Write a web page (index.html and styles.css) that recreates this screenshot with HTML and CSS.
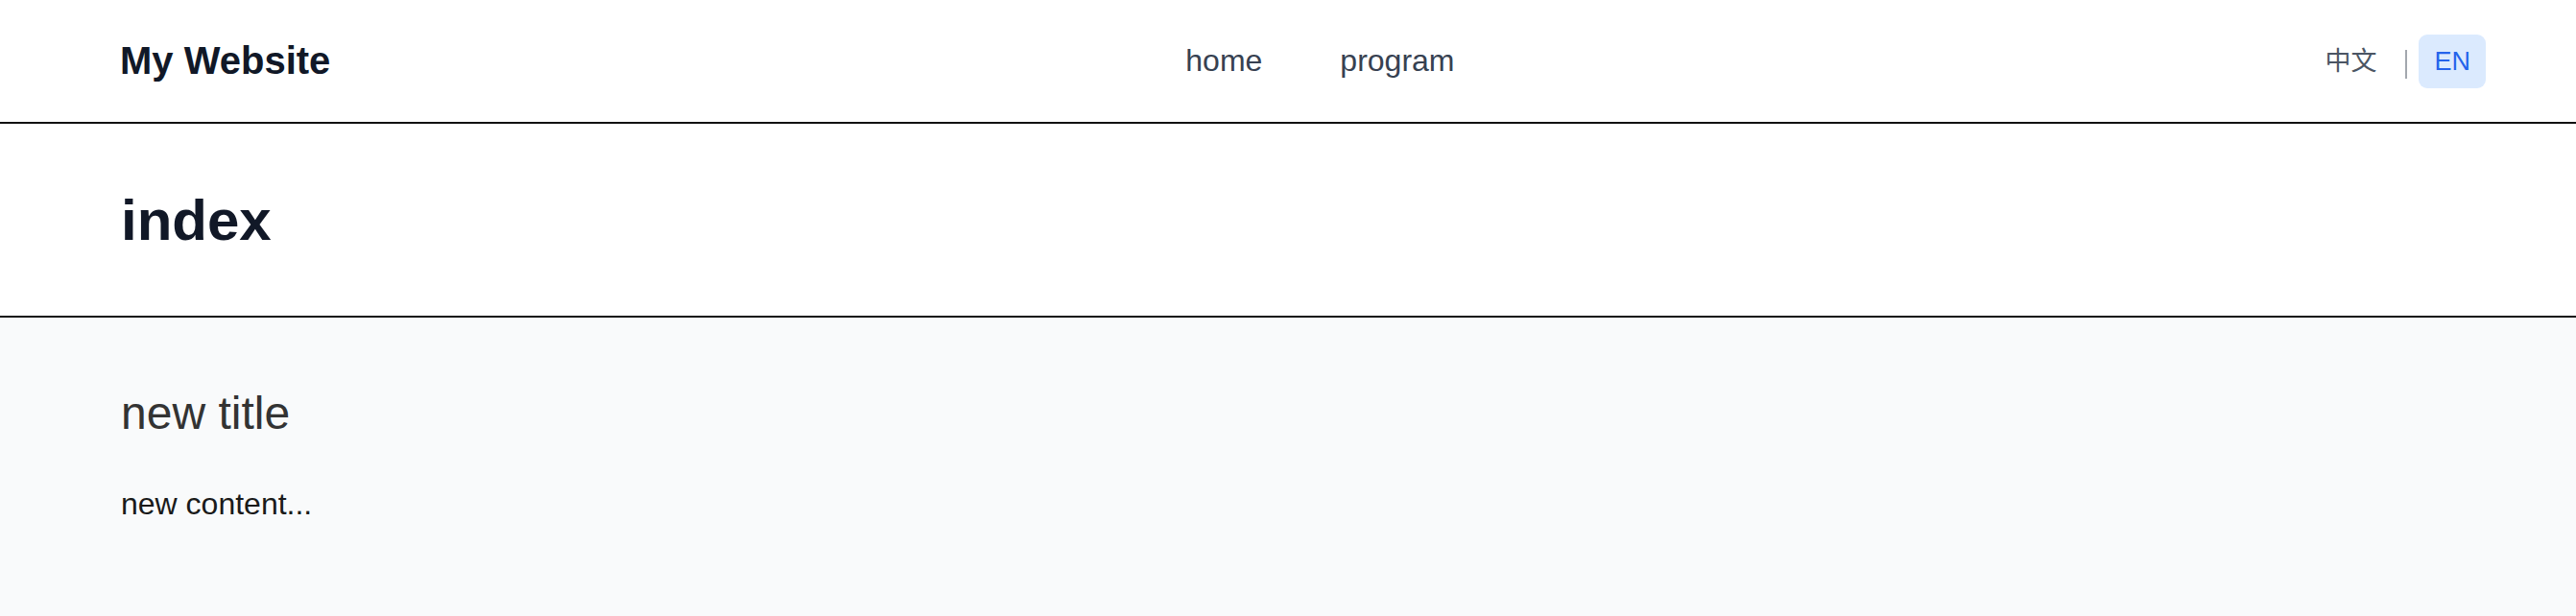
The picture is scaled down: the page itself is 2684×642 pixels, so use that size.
FILE: index.html
```html
<!DOCTYPE html>
<html lang="en">
<head>
<meta charset="utf-8">
<title>My Website</title>
<link rel="stylesheet" href="styles.css">
</head>
<body>
<header class="site-header">
  <div class="logo">My Website</div>
  <nav class="main-nav">
    <a href="#" class="nav-link">home</a>
    <a href="#" class="nav-link">program</a>
  </nav>
  <div class="lang-switch">
    <button class="lang-btn">中文</button>
    <span class="lang-sep"></span>
    <button class="lang-btn active">EN</button>
  </div>
</header>
<section class="page-title">
  <h1>index</h1>
</section>
<main class="content">
  <h2 class="content-title">new title</h2>
  <p class="content-text">new content...</p>
</main>
</body>
</html>
```
FILE: styles.css
```css
* { box-sizing: border-box; }
html, body {
  margin: 0;
  padding: 0;
}
body {
  font-family: "Liberation Sans", Arial, "Noto Sans CJK SC", sans-serif;
  background: #f9fafb;
  height: 642px;
  overflow: hidden;
}
.site-header {
  display: flex;
  align-items: center;
  justify-content: space-between;
  height: 129px;
  padding: 0 94px 0 125px;
  background: #ffffff;
  border-bottom: 2px solid #111111;
}
.logo {
  font-size: 40px;
  font-weight: 700;
  color: #111827;
}
.main-nav {
  display: flex;
  gap: 81px;
}
.nav-link {
  font-size: 32px;
  color: #374151;
  text-decoration: none;
}
.lang-switch {
  display: flex;
  align-items: center;
}
.lang-btn {
  font-family: "Liberation Sans", Arial, "Noto Sans CJK SC", sans-serif;
  font-size: 27px;
  line-height: 42px;
  padding: 7px 16px;
  border: none;
  border-radius: 9px;
  background: transparent;
  color: #4b5563;
  cursor: pointer;
}
.lang-btn.active {
  background: #dbeafe;
  color: #2563eb;
}
.lang-sep {
  display: inline-block;
  width: 2px;
  height: 30px;
  margin: 6px 12px 0 14px;
  background: #a3a7ae;
}
.page-title {
  background: #ffffff;
  padding: 71px 0 69px 126px;
  border-bottom: 2px solid #111111;
}
.page-title h1 {
  margin: 0;
  font-size: 60px;
  line-height: 60px;
  font-weight: 700;
  color: #111827;
}
.content {
  padding: 71px 0 0 126px;
}
.content-title {
  margin: 0;
  font-size: 48px;
  line-height: 57.6px;
  font-weight: 400;
  color: #333333;
}
.content-text {
  margin: 41px 0 0;
  font-size: 32px;
  line-height: 49.5px;
  color: #1a1a1a;
}
```
